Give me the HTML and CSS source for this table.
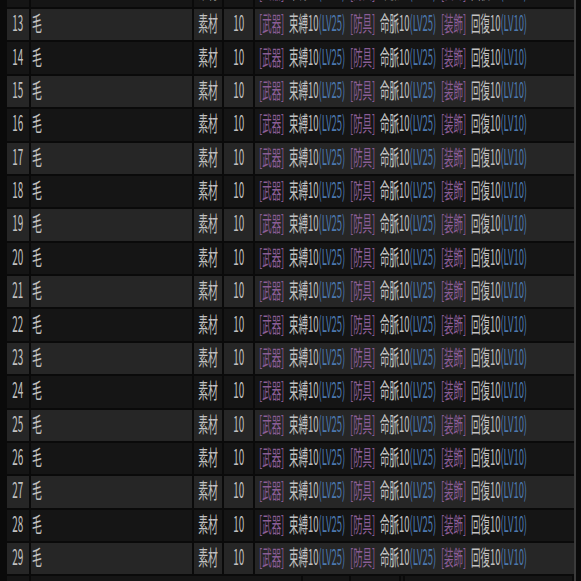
FILE: index.html
```html
<!DOCTYPE html>
<html lang="ja">
<head>
<meta charset="utf-8">
<link rel="stylesheet" href="styles.css">
</head>
<body>
<div class="sheet">
  <div class="row even"><div class="c num"><span class="t">12</span></div><div class="c name"><span class="t">毛</span></div><div class="c mid"><span class="t">素材</span></div><div class="c mid"><span class="t">10</span></div><div class="c eff"><span class="t"><span class="tag">[武器]</span> 束縛10<span class="lv">(LV25)</span> <span class="tag">[防具]</span> 命脈10<span class="lv">(LV25)</span> <span class="tag">[装飾]</span> 回復10<span class="lv">(LV10)</span></span></div></div>
  <div class="row odd"><div class="c num"><span class="t">13</span></div><div class="c name"><span class="t">毛</span></div><div class="c mid"><span class="t">素材</span></div><div class="c mid"><span class="t">10</span></div><div class="c eff"><span class="t"><span class="tag">[武器]</span> 束縛10<span class="lv">(LV25)</span> <span class="tag">[防具]</span> 命脈10<span class="lv">(LV25)</span> <span class="tag">[装飾]</span> 回復10<span class="lv">(LV10)</span></span></div></div>
  <div class="row even"><div class="c num"><span class="t">14</span></div><div class="c name"><span class="t">毛</span></div><div class="c mid"><span class="t">素材</span></div><div class="c mid"><span class="t">10</span></div><div class="c eff"><span class="t"><span class="tag">[武器]</span> 束縛10<span class="lv">(LV25)</span> <span class="tag">[防具]</span> 命脈10<span class="lv">(LV25)</span> <span class="tag">[装飾]</span> 回復10<span class="lv">(LV10)</span></span></div></div>
  <div class="row odd"><div class="c num"><span class="t">15</span></div><div class="c name"><span class="t">毛</span></div><div class="c mid"><span class="t">素材</span></div><div class="c mid"><span class="t">10</span></div><div class="c eff"><span class="t"><span class="tag">[武器]</span> 束縛10<span class="lv">(LV25)</span> <span class="tag">[防具]</span> 命脈10<span class="lv">(LV25)</span> <span class="tag">[装飾]</span> 回復10<span class="lv">(LV10)</span></span></div></div>
  <div class="row even"><div class="c num"><span class="t">16</span></div><div class="c name"><span class="t">毛</span></div><div class="c mid"><span class="t">素材</span></div><div class="c mid"><span class="t">10</span></div><div class="c eff"><span class="t"><span class="tag">[武器]</span> 束縛10<span class="lv">(LV25)</span> <span class="tag">[防具]</span> 命脈10<span class="lv">(LV25)</span> <span class="tag">[装飾]</span> 回復10<span class="lv">(LV10)</span></span></div></div>
  <div class="row odd"><div class="c num"><span class="t">17</span></div><div class="c name"><span class="t">毛</span></div><div class="c mid"><span class="t">素材</span></div><div class="c mid"><span class="t">10</span></div><div class="c eff"><span class="t"><span class="tag">[武器]</span> 束縛10<span class="lv">(LV25)</span> <span class="tag">[防具]</span> 命脈10<span class="lv">(LV25)</span> <span class="tag">[装飾]</span> 回復10<span class="lv">(LV10)</span></span></div></div>
  <div class="row even"><div class="c num"><span class="t">18</span></div><div class="c name"><span class="t">毛</span></div><div class="c mid"><span class="t">素材</span></div><div class="c mid"><span class="t">10</span></div><div class="c eff"><span class="t"><span class="tag">[武器]</span> 束縛10<span class="lv">(LV25)</span> <span class="tag">[防具]</span> 命脈10<span class="lv">(LV25)</span> <span class="tag">[装飾]</span> 回復10<span class="lv">(LV10)</span></span></div></div>
  <div class="row odd"><div class="c num"><span class="t">19</span></div><div class="c name"><span class="t">毛</span></div><div class="c mid"><span class="t">素材</span></div><div class="c mid"><span class="t">10</span></div><div class="c eff"><span class="t"><span class="tag">[武器]</span> 束縛10<span class="lv">(LV25)</span> <span class="tag">[防具]</span> 命脈10<span class="lv">(LV25)</span> <span class="tag">[装飾]</span> 回復10<span class="lv">(LV10)</span></span></div></div>
  <div class="row even"><div class="c num"><span class="t">20</span></div><div class="c name"><span class="t">毛</span></div><div class="c mid"><span class="t">素材</span></div><div class="c mid"><span class="t">10</span></div><div class="c eff"><span class="t"><span class="tag">[武器]</span> 束縛10<span class="lv">(LV25)</span> <span class="tag">[防具]</span> 命脈10<span class="lv">(LV25)</span> <span class="tag">[装飾]</span> 回復10<span class="lv">(LV10)</span></span></div></div>
  <div class="row odd"><div class="c num"><span class="t">21</span></div><div class="c name"><span class="t">毛</span></div><div class="c mid"><span class="t">素材</span></div><div class="c mid"><span class="t">10</span></div><div class="c eff"><span class="t"><span class="tag">[武器]</span> 束縛10<span class="lv">(LV25)</span> <span class="tag">[防具]</span> 命脈10<span class="lv">(LV25)</span> <span class="tag">[装飾]</span> 回復10<span class="lv">(LV10)</span></span></div></div>
  <div class="row even"><div class="c num"><span class="t">22</span></div><div class="c name"><span class="t">毛</span></div><div class="c mid"><span class="t">素材</span></div><div class="c mid"><span class="t">10</span></div><div class="c eff"><span class="t"><span class="tag">[武器]</span> 束縛10<span class="lv">(LV25)</span> <span class="tag">[防具]</span> 命脈10<span class="lv">(LV25)</span> <span class="tag">[装飾]</span> 回復10<span class="lv">(LV10)</span></span></div></div>
  <div class="row odd"><div class="c num"><span class="t">23</span></div><div class="c name"><span class="t">毛</span></div><div class="c mid"><span class="t">素材</span></div><div class="c mid"><span class="t">10</span></div><div class="c eff"><span class="t"><span class="tag">[武器]</span> 束縛10<span class="lv">(LV25)</span> <span class="tag">[防具]</span> 命脈10<span class="lv">(LV25)</span> <span class="tag">[装飾]</span> 回復10<span class="lv">(LV10)</span></span></div></div>
  <div class="row even"><div class="c num"><span class="t">24</span></div><div class="c name"><span class="t">毛</span></div><div class="c mid"><span class="t">素材</span></div><div class="c mid"><span class="t">10</span></div><div class="c eff"><span class="t"><span class="tag">[武器]</span> 束縛10<span class="lv">(LV25)</span> <span class="tag">[防具]</span> 命脈10<span class="lv">(LV25)</span> <span class="tag">[装飾]</span> 回復10<span class="lv">(LV10)</span></span></div></div>
  <div class="row odd"><div class="c num"><span class="t">25</span></div><div class="c name"><span class="t">毛</span></div><div class="c mid"><span class="t">素材</span></div><div class="c mid"><span class="t">10</span></div><div class="c eff"><span class="t"><span class="tag">[武器]</span> 束縛10<span class="lv">(LV25)</span> <span class="tag">[防具]</span> 命脈10<span class="lv">(LV25)</span> <span class="tag">[装飾]</span> 回復10<span class="lv">(LV10)</span></span></div></div>
  <div class="row even"><div class="c num"><span class="t">26</span></div><div class="c name"><span class="t">毛</span></div><div class="c mid"><span class="t">素材</span></div><div class="c mid"><span class="t">10</span></div><div class="c eff"><span class="t"><span class="tag">[武器]</span> 束縛10<span class="lv">(LV25)</span> <span class="tag">[防具]</span> 命脈10<span class="lv">(LV25)</span> <span class="tag">[装飾]</span> 回復10<span class="lv">(LV10)</span></span></div></div>
  <div class="row odd"><div class="c num"><span class="t">27</span></div><div class="c name"><span class="t">毛</span></div><div class="c mid"><span class="t">素材</span></div><div class="c mid"><span class="t">10</span></div><div class="c eff"><span class="t"><span class="tag">[武器]</span> 束縛10<span class="lv">(LV25)</span> <span class="tag">[防具]</span> 命脈10<span class="lv">(LV25)</span> <span class="tag">[装飾]</span> 回復10<span class="lv">(LV10)</span></span></div></div>
  <div class="row even"><div class="c num"><span class="t">28</span></div><div class="c name"><span class="t">毛</span></div><div class="c mid"><span class="t">素材</span></div><div class="c mid"><span class="t">10</span></div><div class="c eff"><span class="t"><span class="tag">[武器]</span> 束縛10<span class="lv">(LV25)</span> <span class="tag">[防具]</span> 命脈10<span class="lv">(LV25)</span> <span class="tag">[装飾]</span> 回復10<span class="lv">(LV10)</span></span></div></div>
  <div class="row odd"><div class="c num"><span class="t">29</span></div><div class="c name"><span class="t">毛</span></div><div class="c mid"><span class="t">素材</span></div><div class="c mid"><span class="t">10</span></div><div class="c eff"><span class="t"><span class="tag">[武器]</span> 束縛10<span class="lv">(LV25)</span> <span class="tag">[防具]</span> 命脈10<span class="lv">(LV25)</span> <span class="tag">[装飾]</span> 回復10<span class="lv">(LV10)</span></span></div></div>
  <div class="row even alt"><div class="c"></div><div class="c"></div><div class="c"></div><div class="c"></div><div class="c"></div><div class="c"></div></div>
</div>
</body>
</html>
```

FILE: styles.css
```css
html, body {
  margin: 0;
  padding: 0;
  background: #0a0a0a;
  overflow: hidden;
}

.sheet {
  width: 567px;
  margin-top: -24.375px;
  padding-left: 7px;
  border-right: 2px solid #3b3b3b;
  display: flex;
  flex-direction: column;
  gap: 2px;
  font-family: "Noto Sans CJK JP", "Noto Sans", sans-serif;
  font-size: 21px;
  color: #c2c2c2;
}

.row {
  display: grid;
  grid-template-columns: 22px 161px 28px 29px 319px;
  column-gap: 2px;
  height: 31.375px;
}

.row.alt {
  grid-template-columns: 22px 270px 46px 48px 2px 167px;
}

.odd .c { background: #262626; }
.even .c { background: #151515; }

.c {
  display: flex;
  align-items: center;
  overflow: hidden;
  white-space: nowrap;
  padding-bottom: 4px;
  box-sizing: border-box;
}

.num, .mid { justify-content: center; }
.name { padding-left: 1px; }
.eff { padding-left: 4px; }

.t {
  display: inline-block;
  line-height: 1;
  transform: scaleX(0.47);
  transform-origin: center center;
}

.eff .t {
  transform: scaleX(0.45);
  word-spacing: 6px;
}

.name .t, .eff .t { transform-origin: left center; }

.tag { color: #8a5d96; }
.lv { color: #4c79b0; }
```
